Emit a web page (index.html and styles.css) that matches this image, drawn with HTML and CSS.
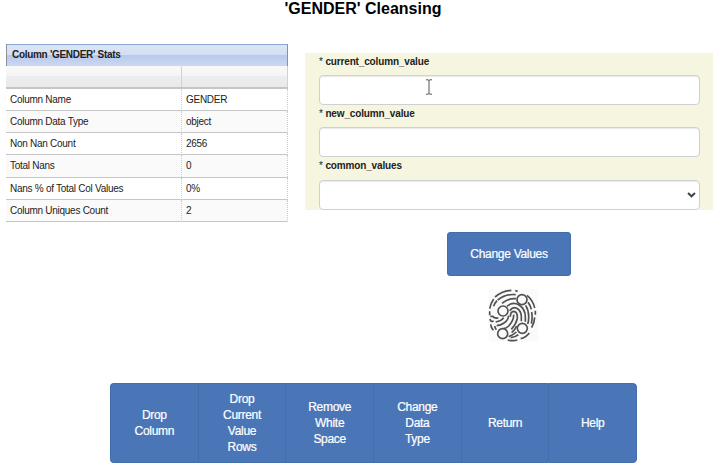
FILE: index.html
```html
<!DOCTYPE html>
<html lang="en">
<head>
<meta charset="utf-8">
<title>'GENDER' Cleansing</title>
<link rel="stylesheet" href="styles.css">
</head>
<body>
<h1 class="title">'GENDER' Cleansing</h1>
<main class="content">
  <section class="stats">
    <div class="caption">Column 'GENDER' Stats</div>
    <div class="row head"><span></span><span></span></div>
    <div class="row"><span>Column Name</span><span>GENDER</span></div>
    <div class="row"><span>Column Data Type</span><span>object</span></div>
    <div class="row"><span>Non Nan Count</span><span>2656</span></div>
    <div class="row"><span>Total Nans</span><span>0</span></div>
    <div class="row"><span>Nans % of Total Col Values</span><span>0%</span></div>
    <div class="row"><span>Column Uniques Count</span><span>2</span></div>
  </section>
  <div class="editor">
    <form class="form">
      <label for="current"><i>*</i> current_column_value</label>
      <div class="field">
        <input id="current" type="text">
        <svg class="ibeam" width="8" height="16" viewBox="0 0 8 16"><path d="M1 .8h2l1 .7 1-.7h2M4 1.5v13M1 15.2h2l1-.7 1 .7h2"/></svg>
      </div>
      <label for="new"><i>*</i> new_column_value</label>
      <div class="field"><input id="new" type="text"></div>
      <label for="common"><i>*</i> common_values</label>
      <div class="field last">
        <select id="common"></select>
        <svg class="chevron" width="9" height="6" viewBox="0 0 9 6"><path d="M1 1l3.5 3.3L8 1"/></svg>
      </div>
    </form>
    <button class="change">Change Values</button>
    <svg class="finger" width="66" height="66" viewBox="0 0 198 198">
      <rect class="backdrop" x="26" y="22" width="149" height="156"/>
      <g class="ridges">
        <path d="M45 45Q66 27 94 25M106 26L113 28M29 80Q32 64 41 51M29 100V88M53 54Q77 35 107 38M41 73Q44 63 51 56"/>
        <path d="M66 64Q84 48 108 50M81 73Q98 58 117 69Q136 81 136 105V119M141 40Q159 54 164 78M144 61Q151 69 154 82M166 86V98M155 90Q158 108 154 125M164 106Q163 123 155 137"/>
        <path d="M89 86Q101 71 114 81Q125 90 124 109V118M91 104Q91 88 102 88Q113 90 112 109Q108 127 94 142M101 98Q102 115 86 132Q79 139 70 140"/>
        <path d="M86 101Q84 116 72 123Q62 130 50 131M71 107Q65 117 47 120M55 107Q45 111 38 103H31M30 111Q32 121 41 117M32 127Q33 136 40 145M44 132Q45 138 49 143"/>
        <path d="M137 70Q147 86 146 108Q146 119 143 126M95 152Q106 142 110 132M86 164Q99 160 109 150M83 174Q99 178 112 174M92 167Q106 166 115 158M122 170Q137 167 148 153"/>
      </g>
      <g class="nodes"><circle cx="126" cy="53" r="15"/><circle cx="69" cy="87" r="15"/><circle cx="127" cy="139" r="15"/><circle cx="68" cy="155" r="15"/></g>
    </svg>
  </div>
</main>
<nav class="actions">
  <button>Drop<br>Column</button>
  <button>Drop<br>Current<br>Value<br>Rows</button>
  <button>Remove<br>White<br>Space</button>
  <button>Change<br>Data<br>Type</button>
  <button>Return</button>
  <button>Help</button>
</nav>
</body>
</html>
```
FILE: styles.css
```css
* { box-sizing: border-box; }
body {
  margin: 0;
  width: 720px;
  height: 471px;
  overflow: hidden;
  background: #fff;
  font-family: "Liberation Sans", Arial, sans-serif;
  color: #222;
}
.title {
  margin: 0 0 0 6px;
  height: 44px;
  font-size: 16px;
  line-height: 18px;
  text-align: center;
  color: #000;
}
.content {
  display: grid;
  grid-template-columns: 282px 408px;
  column-gap: 17px;
  padding-left: 6px;
  height: 339px;
  align-items: start;
}
.caption {
  height: 22px;
  padding-left: 5px;
  border: 1px solid #8aa5d2;
  border-right-color: #8c919b;
  border-left-color: #8c919b;
  border-bottom: 0;
  background: linear-gradient(#dce6f5, #d2dff2 48%, #b9c9eb 50%, #cbd8f2);
  font-size: 10px;
  letter-spacing: -.3px;
  font-weight: bold;
  line-height: 20px;
}
.row {
  display: grid;
  grid-template-columns: 176px 106px;
  height: 22.15px;
  border-bottom: 1px solid #c6c6c6;
  font-size: 10px;
  letter-spacing: -.27px;
  line-height: 22px;
}
.row:nth-child(even) { background: #fafafa; }
.row span { padding-left: 4px; border-right: 1px dotted #ccc; }
.row span + span { padding-left: 4px; }
.row.head {
  height: 23px;
  border-bottom: 2px solid #c5c5c5;
  background: linear-gradient(#f9f9f9, #f5f5f5 45%, #ededee 50%, #e8e9ea);
}
.row.head span { border-right: 1px solid #d2d2d2; }
.editor { display: flex; flex-direction: column; align-items: center; }
.form {
  width: 408px;
  height: 157px;
  margin-top: 9px;
  padding: 0 14px;
  background: #f5f5e0;
}
label {
  display: block;
  height: 22px;
  font-size: 10px;
  letter-spacing: -.15px;
  font-weight: bold;
  line-height: 18px;
}
label i { font-style: normal; font-weight: normal; }
.field { position: relative; width: 381px; height: 30px; }
.field.last { margin-top: 1px; }
input, select {
  display: block;
  width: 100%;
  height: 100%;
  margin: 0;
  border: 1px solid #cfd0d2;
  border-radius: 4px;
  background: #fff;
  box-shadow: inset 0 1px 1px #e9e9e9;
  appearance: none;
}
.ibeam, .chevron { position: absolute; fill: none; stroke: #555; }
.ibeam { left: 106px; top: 4px; stroke-width: 1; }
.chevron { right: 4px; top: 12px; stroke: #444; stroke-width: 2; }
button {
  margin: 0;
  padding: 0;
  border: 1px solid #426eaa;
  background: #4a76b8;
  color: #fff;
  font: 12px/16px "Liberation Sans", Arial, sans-serif;
  letter-spacing: -.3px;
  -webkit-text-stroke: .2px #fff;
}
.change { width: 124px; height: 44px; margin-top: 22px; border-radius: 3px; }
.finger { margin: 6px 0 0 8px; }
.backdrop { fill: #fafafa; }
.ridges, .nodes { fill: none; stroke: #505050; stroke-width: 5; }
.nodes { fill: #fafafa; }
.actions { display: flex; width: 527px; height: 80px; margin-left: 110px; }
.actions button { flex: 1; border-right-width: 0; }
.actions button:first-child { border-radius: 4px 0 0 4px; }
.actions button:last-child { border-right-width: 1px; border-radius: 0 4px 4px 0; }
```
